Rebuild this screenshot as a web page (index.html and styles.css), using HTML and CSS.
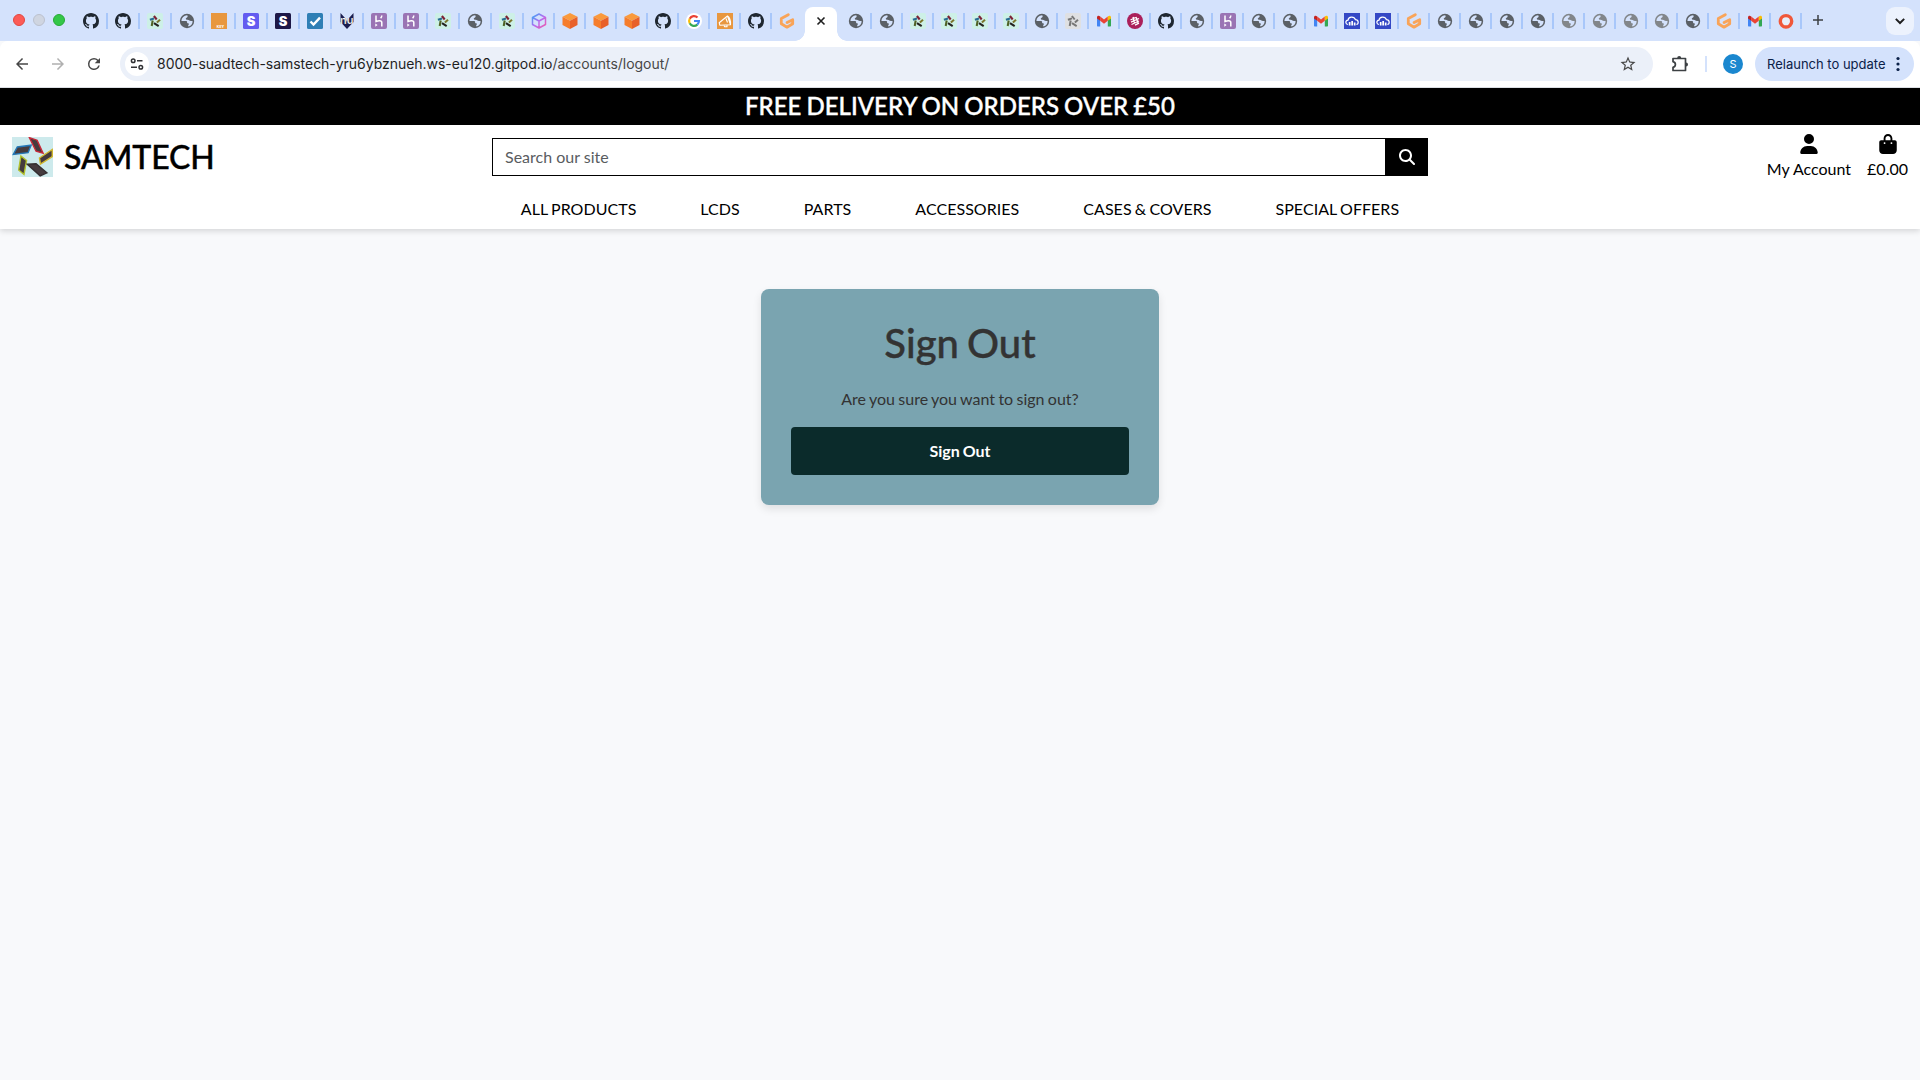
FILE: index.html
```html
<!DOCTYPE html>
<html lang="en">
<head>
<meta charset="utf-8">
<title>Sign Out</title>
<link rel="stylesheet" href="styles.css">
</head>
<body>
<svg class="sprite" aria-hidden="true">
  <symbol id="gh" viewBox="0 0 16 16"><path fill="#1f2730" d="M8 0C3.58 0 0 3.58 0 8c0 3.54 2.29 6.53 5.47 7.59.4.07.55-.17.55-.38 0-.19-.01-.82-.01-1.49-2.01.37-2.53-.49-2.69-.94-.09-.23-.48-.94-.82-1.13-.28-.15-.68-.52-.01-.53.63-.01 1.08.58 1.23.82.72 1.21 1.87.87 2.33.66.07-.52.28-.87.51-1.07-1.78-.2-3.64-.89-3.64-3.95 0-.87.31-1.59.82-2.15-.08-.2-.36-1.02.08-2.12 0 0 .67-.21 2.2.82.64-.18 1.32-.27 2-.27s1.36.09 2 .27c1.53-1.04 2.2-.82 2.2-.82.44 1.1.16 1.92.08 2.12.51.56.82 1.27.82 2.15 0 3.07-1.87 3.75-3.65 3.95.29.25.54.73.54 1.48 0 1.07-.01 1.93-.01 2.2 0 .21.15.46.55.38A8.01 8.01 0 0 0 16 8c0-4.42-3.58-8-8-8z"/></symbol>
  <symbol id="globe" viewBox="0 0 16 16"><circle cx="8" cy="8" r="7.2" fill="currentColor"/><path fill="#d4e2fc" d="M8.200 2.300C9 3.400 8.700 4.400 7.600 4.800c-1 .4-1 1.300-.4 1.700.8.5 2.300 0 2.900.8.6.8 1.700.6 3.500.6a5.600 5.600 0 0 1-4.100 5.500c-.6-.5-.3-1.400.2-1.800.5-.5.1-1.200-.6-1.300-.9-.1-1.100-.8-1-1.400.1-.6-.6-.9-1.500-.9H2.400A5.700 5.700 0 0 1 8.200 2.300z"/><path fill="currentColor" d="M9 2l1 2-1 1 2 .3.600 1.700 2.500-1-2-3.600z"/></symbol>
  <symbol id="phones" viewBox="0 0 40 40">
    <g fill="#453b3e" stroke-width="1.400">
      <path stroke="#c92838" d="M17 0.700l7.500 2.500 5.800 13-6.800-2z"/>
      <path stroke="#2478b8" d="M1.200 17.500l4-7.500 13.500-1.800-3 7.500z"/>
      <path stroke="#d0b72f" d="M39.300 12.500v7l-11.500 7.500-1-6z"/>
      <path stroke="#b2c02d" d="M8.700 19l5.500 4.500-2.500 14-5.200-4.500z"/>
      <path stroke="#342f31" d="M15 27.300l8.500-.5 10.500 9-6.500 3z"/>
    </g>
  </symbol>
  <symbol id="fav" viewBox="0 0 16 16"><rect width="16" height="16" rx="2" fill="#cdf0e7"/><g fill="none" stroke-width="2.100"><path stroke="#7d2334" d="M6.900 3l2.800 3.500"/><path stroke="#276c92" d="M2.900 6.700L7 5.400"/><path stroke="#7b762e" d="M13 6.800L9.900 9.500"/><path stroke="#4f6226" d="M5.700 7.500L4.700 13"/><path stroke="#24231f" d="M7 10.200l4.700 3"/></g></symbol>
  <symbol id="favgray" viewBox="0 0 16 16"><rect width="16" height="16" rx="2" fill="#dfe0e2"/><path fill="none" stroke="#777" stroke-width="2" d="M6.900 3l2.800 3.500M2.900 6.700L7 5.400M13 6.800L9.900 9.500M5.700 7.500L4.700 13M7 10.200l4.700 3"/></symbol>
  <symbol id="check" viewBox="0 0 16 16"><rect width="16" height="16" rx="1.500" fill="#2f7fb5"/><path d="M3.500 8.500l3 3L13 4.700" fill="none" stroke="#fff" stroke-width="2.400"/></symbol>
  <symbol id="heroku" viewBox="0 0 16 16"><rect width="16" height="16" rx="2" fill="#9a74b4"/><path fill="none" stroke="#fff" stroke-width="1.500" d="M5 2.500v6c2-.8 5.800-1.500 5.800 1v4M10.800 2.500c0 1-.4 1.900-1.200 2.800"/><path fill="#fff" d="M4.300 10.500l2.300 1.600-2.300 1.700z"/></symbol>
  <symbol id="hexbox" viewBox="0 0 16 16"><defs><linearGradient id="hexfill" x2="1" y2="1"><stop offset="0" stop-color="#35a9f5"/><stop offset=".5" stop-color="#b66af0"/><stop offset="1" stop-color="#f05aa8"/></linearGradient></defs><path fill="none" stroke="url(#hexfill)" stroke-width="1.500" stroke-linejoin="round" d="M8 1l6.500 3.500v7L8 15l-6.500-3.500v-7zM1.500 4.500L8 8l6.500-3.500M8 8v7"/></symbol>
  <symbol id="cube" viewBox="0 0 16 16"><path fill="#fa9a3c" d="M8 0l7.500 3.800L8 7.800.5 3.800z"/><path fill="#f67d2c" d="M.5 3.800L8 7.800V16L.5 12z"/><path fill="#e8602a" d="M15.500 3.800L8 7.800V16l7.500-4z"/></symbol>
  <symbol id="google" viewBox="0 0 16 16"><circle cx="8" cy="8" r="8" fill="#fff"/><g fill="none" stroke-width="2.200"><path stroke="#ea4335" d="M3.700 5.700A4.900 4.900 0 0 1 11.500 4.500"/><path stroke="#fbbc05" d="M3.700 10.300a4.900 4.900 0 0 1 0-4.600"/><path stroke="#34a853" d="M11.300 11.600a4.900 4.900 0 0 1-7.600-1.300"/><path stroke="#4285f4" d="M8 8h4.900a4.800 4.800 0 0 1-1.600 3.600"/></g></symbol>
  <symbol id="mega" viewBox="0 0 16 16"><rect width="16" height="16" fill="#e8973f"/><path fill="none" stroke="#fff" stroke-width="1.100" stroke-linejoin="round" d="M2.200 9.700L10.500 3l3 8.700-10.700.5zM10.500 3c2 1.500 3.300 5 3 8.700M7 12l.5 1.700h2.500L10 12M9 5.500l1.500 4"/></symbol>
  <symbol id="gitpod" viewBox="0 0 16 16"><path fill="none" stroke="#f9a458" stroke-width="2.800" stroke-linejoin="round" stroke-linecap="round" d="M9.300 1.700L2.300 5.400v5.400L8 14.200l5.700-3.400V6.700L8.100 9.600"/></symbol>
  <symbol id="gmail" viewBox="0 0 16 16"><path fill="#4285f4" d="M1 4.500l3.200 2.300V13.500H2c-.6 0-1-.4-1-1z"/><path fill="#34a853" d="M15 4.500l-3.200 2.300v6.700H14c.6 0 1-.4 1-1z"/><path fill="#ea4335" d="M4.200 3.600L8 6.500l3.800-2.900v4.200L8 10.700 4.200 7.800z"/><path fill="#c5221f" d="M1 4.500C1 2.700 2.800 2.200 4.200 3.600v4.200L1 5.500z"/><path fill="#fbbc04" d="M15 4.500c0-1.800-1.800-2.300-3.200-.9v4.200L15 5.500z"/></symbol>
  <symbol id="maroon" viewBox="0 0 16 16"><circle cx="8" cy="8" r="8" fill="#ab1f5a"/><path stroke="#fff" stroke-width="1.300" d="M3.500 7l5-2.500M4 9.200l8-3.700M4.500 11.500l7.500-3.500M8 12.200l4-2M6 4l1.500 6M9 4l2 6"/></symbol>
  <symbol id="cloud" viewBox="0 0 16 16"><rect width="16" height="16" fill="#3448c5"/><path fill="none" stroke="#fff" stroke-width="1.200" d="M4 11.500C1.300 11.300 1 7.700 4 7.200 4.500 3.500 10 3 11.500 6.700c3.200 0 3.600 4.300.9 4.800"/><path fill="#fff" d="M4.800 9h1.700v3.500H4.800zM7.300 8h1.700v4.500H7.300zM9.800 9.500h1.700v3H9.800z"/></symbol>
  <symbol id="ring" viewBox="0 0 16 16"><circle cx="8" cy="8.300" r="5.700" fill="#e8effa" stroke="#f0573a" stroke-width="3.400"/></symbol>
</svg>

<div class="tabstrip">
  <div class="lights"><i class="red"></i><i class="gray"></i><i class="green"></i></div>
  <div class="tabs">
    <span class="tab wide"><svg><use href="#gh"/></svg></span>
    <span class="tab wide"><svg><use href="#gh"/></svg></span>
    <span class="tab wide"><svg><use href="#fav"/></svg></span>
    <span class="tab wide"><svg><use href="#globe"/></svg></span>
    <span class="tab wide"><svg viewBox="0 0 16 16"><rect width="16" height="16" fill="#e8973f"/><text x="5.500" y="14.500" class="key-label">KEY</text></svg></span>
    <span class="tab wide"><svg viewBox="0 0 16 16"><rect width="16" height="16" rx="1.500" fill="#635bf0"/><text x="8" y="12.500" class="s-label">S</text></svg></span>
    <span class="tab wide"><svg viewBox="0 0 16 16"><rect width="16" height="16" rx="1.500" fill="#1d1847"/><text x="8" y="12.500" class="s-label">S</text></svg></span>
    <span class="tab wide"><svg><use href="#check"/></svg></span>
    <span class="tab wide"><svg viewBox="0 0 16 16"><path fill="#1c1e4f" d="M1.500 0L6 5l2 4 2-4 4.500-5v9L8 16 1.500 9z"/><text x="1" y="10.800" class="nu-label">nu</text></svg></span>
    <span class="tab wide"><svg><use href="#heroku"/></svg></span>
    <span class="tab wide"><svg><use href="#heroku"/></svg></span>
    <span class="tab wide"><svg><use href="#fav"/></svg></span>
    <span class="tab wide"><svg><use href="#globe"/></svg></span>
    <span class="tab wide"><svg><use href="#fav"/></svg></span>
    <span class="tab"><svg><use href="#hexbox"/></svg></span>
    <span class="tab"><svg><use href="#cube"/></svg></span>
    <span class="tab"><svg><use href="#cube"/></svg></span>
    <span class="tab"><svg><use href="#cube"/></svg></span>
    <span class="tab"><svg><use href="#gh"/></svg></span>
    <span class="tab"><svg><use href="#google"/></svg></span>
    <span class="tab"><svg><use href="#mega"/></svg></span>
    <span class="tab"><svg><use href="#gh"/></svg></span>
    <span class="tab last"><svg><use href="#gitpod"/></svg></span>
    <span class="active-tab"><svg viewBox="0 0 10 10"><path d="M1.500 1.500l7 7M8.500 1.500l-7 7" stroke="#1f1f1f" stroke-width="1.600"/></svg></span>
    <span class="tab"><svg><use href="#globe"/></svg></span>
    <span class="tab"><svg><use href="#globe"/></svg></span>
    <span class="tab"><svg><use href="#fav"/></svg></span>
    <span class="tab"><svg><use href="#fav"/></svg></span>
    <span class="tab"><svg><use href="#fav"/></svg></span>
    <span class="tab"><svg><use href="#fav"/></svg></span>
    <span class="tab"><svg><use href="#globe"/></svg></span>
    <span class="tab"><svg><use href="#favgray"/></svg></span>
    <span class="tab"><svg><use href="#gmail"/></svg></span>
    <span class="tab"><svg><use href="#maroon"/></svg></span>
    <span class="tab"><svg><use href="#gh"/></svg></span>
    <span class="tab"><svg><use href="#globe"/></svg></span>
    <span class="tab"><svg><use href="#heroku"/></svg></span>
    <span class="tab"><svg><use href="#globe"/></svg></span>
    <span class="tab"><svg><use href="#globe"/></svg></span>
    <span class="tab"><svg><use href="#gmail"/></svg></span>
    <span class="tab"><svg><use href="#cloud"/></svg></span>
    <span class="tab"><svg><use href="#cloud"/></svg></span>
    <span class="tab"><svg><use href="#gitpod"/></svg></span>
    <span class="tab"><svg><use href="#globe"/></svg></span>
    <span class="tab"><svg><use href="#globe"/></svg></span>
    <span class="tab"><svg><use href="#globe"/></svg></span>
    <span class="tab"><svg><use href="#globe"/></svg></span>
    <span class="tab faded"><svg><use href="#globe"/></svg></span>
    <span class="tab faded"><svg><use href="#globe"/></svg></span>
    <span class="tab faded"><svg><use href="#globe"/></svg></span>
    <span class="tab faded"><svg><use href="#globe"/></svg></span>
    <span class="tab"><svg><use href="#globe"/></svg></span>
    <span class="tab"><svg><use href="#gitpod"/></svg></span>
    <span class="tab"><svg><use href="#gmail"/></svg></span>
    <span class="tab"><svg><use href="#ring"/></svg></span>
  </div>
  <svg class="plus" viewBox="0 0 12 12"><path d="M6 1v10M1 6h10" stroke="#3c4043" stroke-width="1.500"/></svg>
  <span class="tab-search"><svg viewBox="0 0 10 10"><path d="M1.500 3.200L5 6.700l3.500-3.500" fill="none" stroke="#1f1f1f" stroke-width="1.600"/></svg></span>
</div>

<div class="toolbar">
  <svg class="nav-icon" viewBox="0 0 24 24"><path fill="#474747" d="M20 11H7.830l5.590-5.590L12 4l-8 8 8 8 1.410-1.410L7.830 13H20z"/></svg>
  <svg class="nav-icon" viewBox="0 0 24 24"><path fill="#b0b0b0" d="M4 11h12.170l-5.590-5.590L12 4l8 8-8 8-1.410-1.410L16.170 13H4z"/></svg>
  <svg class="nav-icon" viewBox="0 0 24 24"><path fill="#474747" d="M17.650 6.350A7.960 7.960 0 0 0 12 4a8 8 0 1 0 7.730 10h-2.080A6 6 0 1 1 12 6c1.660 0 3.140.69 4.220 1.780L13 11h7V4z"/></svg>
  <div class="omnibox">
    <span class="site-info"><svg viewBox="0 0 14 14"><g fill="none" stroke="#303134" stroke-width="1.500"><circle cx="3.200" cy="3.800" r="1.800"/><path d="M7 3.800h5.500M1 10.200h6"/><circle cx="10.800" cy="10.200" r="1.800"/></g></svg></span>
    <span class="url">8000-suadtech-samstech-yru6ybznueh.ws-eu120.gitpod.io<span class="path">/accounts/logout/</span></span>
    <svg class="star" viewBox="0 0 24 24"><path fill="#474747" d="M22 9.240l-7.190-.62L12 2 9.190 8.630 2 9.240l5.460 4.730L5.820 21 12 17.270 18.180 21l-1.630-7.030zM12 15.400l-3.760 2.270 1-4.280-3.320-2.880 4.380-.38L12 6.100l1.710 4.040 4.380.38-3.320 2.880 1 4.280z"/></svg>
  </div>
  <svg class="puzzle" viewBox="0 0 18 18"><path fill="none" stroke="#3c4043" stroke-width="1.700" stroke-linejoin="round" d="M2 3.500h12.500v12H2v-3.200c3.200-.6 3.200-5 0-5.600z"/><path fill="#3c4043" d="M6.200 3a2 2 0 0 1 4 0zM15 7.500a2 2 0 0 1 0 4z"/></svg>
  <i class="divider"></i>
  <span class="avatar">S</span>
  <span class="relaunch">Relaunch to update<svg viewBox="0 0 4 16"><g fill="#0b2148"><circle cx="2" cy="2.500" r="1.600"/><circle cx="2" cy="8" r="1.600"/><circle cx="2" cy="13.500" r="1.600"/></g></svg></span>
</div>

<div class="banner">FREE DELIVERY ON ORDERS OVER £50</div>
<header class="header">
  <div class="top-row">
    <a class="brand"><svg class="logo" viewBox="0 0 40 40" preserveAspectRatio="none"><rect width="40" height="40" fill="#cdeaec"/><use href="#phones"/></svg>SAMTECH</a>
    <div class="search"><span class="search-input">Search our site</span><span class="search-button"><svg viewBox="0 0 512 512"><path fill="#fff" d="M416 208c0 45.900-14.900 88.300-40 122.700L502.600 457.400c12.500 12.500 12.500 32.800 0 45.300s-32.800 12.500-45.300 0L330.700 376c-34.400 25.200-76.800 40-122.700 40C93.100 416 0 322.900 0 208S93.100 0 208 0S416 93.100 416 208zM208 352a144 144 0 1 0 0-288 144 144 0 1 0 0 288z"/></svg></span></div>
    <div class="links">
      <a class="link"><svg viewBox="0 0 448 512"><path d="M224 256A128 128 0 1 0 224 0a128 128 0 1 0 0 256zm-45.700 48C79.800 304 0 383.800 0 482.300C0 498.700 13.300 512 29.700 512H418.300c16.400 0 29.700-13.300 29.700-29.700C448 383.800 368.200 304 269.700 304H178.300z"/></svg>My Account</a>
      <a class="link"><svg viewBox="0 0 448 512"><path d="M160 112c0-35.300 28.700-64 64-64s64 28.700 64 64v48H160V112zm-48 48H48c-26.500 0-48 21.500-48 48V416c0 53 43 96 96 96H352c53 0 96-43 96-96V208c0-26.500-21.500-48-48-48H336V112C336 50.100 285.900 0 224 0S112 50.100 112 112v48zm24 48a24 24 0 1 1 0 48 24 24 0 1 1 0-48zm152 24a24 24 0 1 1 48 0 24 24 0 1 1-48 0z"/></svg>£0.00</a>
    </div>
  </div>
  <nav class="menu"><a>ALL PRODUCTS</a><a>LCDS</a><a>PARTS</a><a>ACCESSORIES</a><a>CASES &amp; COVERS</a><a>SPECIAL OFFERS</a></nav>
</header>

<main class="card">
  <h1>Sign Out</h1>
  <p>Are you sure you want to sign out?</p>
  <button type="button">Sign Out</button>
</main>
</body>
</html>
```
FILE: styles.css
```css
* { box-sizing: border-box; }
body { margin: 0; height: 1080px; overflow: hidden; background: #f8f9fb; color: #000; font-family: Lato, sans-serif; font-size: 16px; line-height: 24px; }
.sprite { position: absolute; width: 0; height: 0; }
svg { display: block; flex: none; }

.tabstrip { display: flex; align-items: center; height: 41px; padding: 0 6px 0 13px; background: #d4e2fc; }
.lights { display: flex; gap: 8px; width: 62px; margin-top: -1px; }
.lights i { width: 12px; height: 12px; border-radius: 50%; }
.red { background: #fc5b57; border: 1px solid #e2463f; }
.gray { background: #cfd5e1; border: 1px solid #bbc1ce; }
.green { background: #33c748; border: 1px solid #27aa35; }
.tabs { display: flex; align-items: center; height: 41px; }
.tab { display: flex; align-items: center; justify-content: center; width: 31px; height: 16px; margin-top: 1px; color: #5b6066; box-shadow: 1px 0 #a8c7fa, inset -1px 0 #a8c7fa; }
.tab svg { width: 16px; height: 16px; }
.wide { width: 32px; }
.last { box-shadow: none; }
.faded { color: #82868a; }
.active-tab { position: relative; display: flex; align-items: center; justify-content: center; width: 32px; height: 34px; margin: 7px 3px 0; padding-bottom: 6px; background: #fff; border-radius: 8px 8px 0 0; }
.active-tab::before, .active-tab::after { content: ""; position: absolute; bottom: 0; width: 10px; height: 10px; }
.active-tab::before { right: 100%; background: radial-gradient(circle at 0 0, transparent 9.5px, #fff 10px); }
.active-tab::after { left: 100%; background: radial-gradient(circle at 100% 0, transparent 9.5px, #fff 10px); }
.active-tab svg { width: 10px; height: 10px; }
.plus { width: 12px; height: 12px; margin-left: 11px; margin-top: -1px; }
.tab-search { display: flex; align-items: center; justify-content: center; width: 28px; height: 28px; margin-left: auto; border-radius: 9px; background: #ecf2fd; }
.tab-search svg { width: 12px; height: 12px; }
.key-label { font: bold 4px "Open Sans", sans-serif; fill: #fff; }
.nu-label { font: 600 11px Inter, sans-serif; fill: #fff; stroke: #333; stroke-width: .2px; }
.s-label { font: 900 13px Inter, sans-serif; fill: #fff; text-anchor: middle; }

.toolbar { display: flex; align-items: center; height: 47px; padding: 0 6px 1px 13px; background: #fff; border-bottom: 1px solid #dcdfe4; box-shadow: 0 -8px 0 -0.1px #d4e2fc; border-radius: 8px 8px 0 0; }
.toolbar { box-shadow: none; }
.nav-icon { width: 18px; height: 18px; margin-right: 18px; }
.omnibox { display: flex; align-items: center; width: 1533px; height: 34px; margin-left: -1px; padding: 0 16px 0 5px; border-radius: 17px; background: #ebf0f9; }
.site-info { display: flex; align-items: center; justify-content: center; width: 24px; height: 24px; border-radius: 50%; background: #fff; }
.site-info svg { width: 14px; height: 14px; }
.url { flex: 1; margin-left: 8px; font-family: Inter, sans-serif; font-size: 14px; letter-spacing: -.03px; color: #1f1f1f; white-space: nowrap; }
.path { color: #474747; }
.star { width: 18px; height: 18px; }
.puzzle { width: 18px; height: 18px; margin-left: 18px; }
.divider { width: 2px; height: 16px; margin-left: 16px; background: #d4e2fc; }
.avatar { width: 20px; height: 20px; margin-left: 16px; border-radius: 50%; background: #1a87cf; color: #fff; font: 11px/20px Inter, sans-serif; text-align: center; }
.relaunch { display: flex; align-items: center; justify-content: space-between; width: 159px; height: 34px; margin-left: auto; padding: 0 14px 0 12px; border-radius: 17px; background: #d4e2fc; color: #0b2148; font-family: Inter, sans-serif; font-size: 13px; white-space: nowrap; }
.relaunch svg { width: 4px; height: 16px; }

.banner { height: 37px; background: #000; color: #fff; font-size: 24px; font-weight: 500; line-height: 35px; text-align: center; word-spacing: -1px; -webkit-text-stroke: .4px #fff; }
.header { position: relative; height: 104px; background: #fff; box-shadow: 0 2px 6px rgba(0, 0, 0, .15); }
.top-row { display: grid; grid-template-columns: 480px 936px 1fr; height: 64px; padding: 0 12px; }
.brand { display: flex; align-items: center; gap: 11px; font-size: 32px; font-weight: 500; letter-spacing: -.1px; -webkit-text-stroke: .4px #000; }
.logo { width: 41px; height: 40px; }
.search { display: flex; align-self: center; height: 38px; }
.search-input { flex: 1; padding: 6px 12px 4px; border: 1px solid #000; color: #595c5f; }
.search-button { display: flex; align-items: center; justify-content: center; width: 42px; background: #000; }
.search-button svg { width: 16px; height: 16px; }
.links { display: flex; justify-content: flex-end; gap: 16px; padding-top: 9px; }
.link { display: flex; flex-direction: column; align-items: center; }
.link svg { width: 18px; height: 20px; margin-bottom: 3px; }
.menu { display: flex; justify-content: center; gap: 64px; padding-top: 8px; letter-spacing: .04px; word-spacing: -.9px; }

.card { width: 398px; height: 216px; margin: 60px auto 0; padding: 30px; border-radius: 8px; background: #7aa4b0; box-shadow: 0 4px 8px rgba(0, 0, 0, .1); color: #333; text-align: center; }
.card h1 { margin: 0 0 20px; font-size: 40px; font-weight: 500; line-height: 48px; word-spacing: -2px; -webkit-text-stroke: .4px #333; }
.card p { margin: 0 0 16px; word-spacing: -.75px; }
.card button { display: block; width: 100%; height: 48px; padding: 0; border: 0; border-radius: 4px; background: #0b2b2b; color: #fff; font: bold 16px/24px Lato, sans-serif; word-spacing: -.8px; }
```
